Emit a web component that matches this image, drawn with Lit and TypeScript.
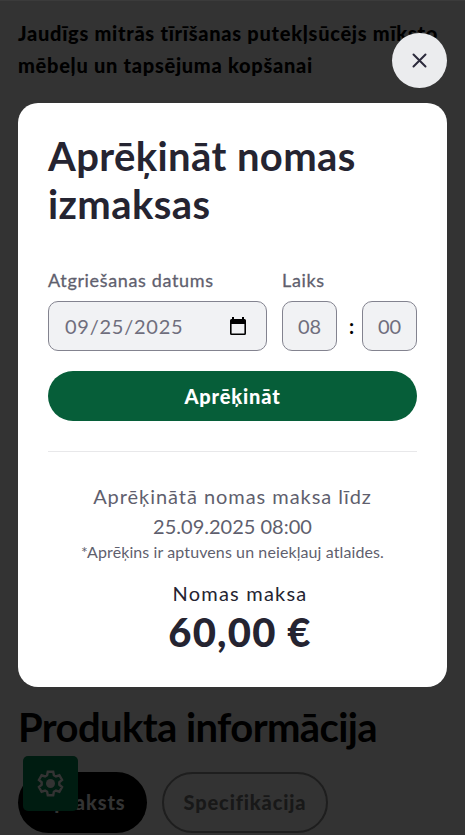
import { LitElement, html, css } from "lit";
import { customElement } from "lit/decorators.js";

// Outline of a six-toothed gear centred on the origin.
const TOOTH = [[-3.4, -8.2], [-2.7, -11.8], [2.7, -11.8], [3.4, -8.2]];
const gearPoints = Array.from({ length: 6 }, (_, i) => (i * Math.PI) / 3)
  .flatMap((a) =>
    TOOTH.map(([x, y]) =>
      `${(x * Math.cos(a) - y * Math.sin(a)).toFixed(2)},${(x * Math.sin(a) + y * Math.cos(a)).toFixed(2)}`))
  .join(" ");

@customElement("app-root")
export class AppRoot extends LitElement {
  static styles = css`
    :host { display: block; position: relative; height: 835px; overflow: hidden; background: #333; color: #000; font-family: Lato, "Open Sans", sans-serif; font-size: 20px; }
    * { box-sizing: border-box; }
    h1, h2, p { margin: 0; }
    span { white-space: nowrap; }
    .page { height: 100%; display: flex; flex-direction: column; justify-content: space-between; padding: 16px 18px 0; border-top: 1px solid #3b3b3b; }
    .intro { font-weight: 900; line-height: 32px; letter-spacing: 0.72px; display: flex; flex-direction: column; align-items: flex-start; }
    .info-title { font-size: 40px; line-height: 48px; margin-bottom: 21px; font-weight: 700; letter-spacing: -0.6px; }
    .tabs { display: flex; gap: 15px; margin-bottom: 2px; }
    .tab { height: 61px; border-radius: 31px; padding-bottom: 2px; display: flex; align-items: center; justify-content: center; font-weight: 900; letter-spacing: 0.85px; }
    .tab.active { width: 129px; background: #000; color: #333; }
    .tab.idle { width: 166px; border: 2px solid #1e1e1e; color: #181818; }
    .settings { position: absolute; left: 23px; top: 756px; width: 55px; height: 55px; border-radius: 5px; background: #001c11; display: grid; place-items: center; }
    .overlay { position: absolute; inset: 0; padding: 33px 18px 0; display: flex; flex-direction: column; gap: 15px; }
    .close { align-self: flex-end; width: 55px; height: 55px; border: 0; padding: 0; border-radius: 50%; background: #ebecee; display: grid; place-items: center; }
    .dialog { height: 584px; background: #fff; border-radius: 20px; padding: 29px 30px 0; display: flex; flex-direction: column; }
    .dialog > * { flex-shrink: 0; }
    .title { color: #252431; font-size: 40px; line-height: 48px; letter-spacing: 0.4px; display: flex; flex-direction: column; align-items: flex-start; }
    .fields { display: grid; grid-template-columns: 219px 135px; gap: 15px; margin-top: 40px; }
    .field { display: flex; flex-direction: column; gap: 9px; }
    .label { font-size: 18px; line-height: 24px; height: 24px; color: #5f5f6e; letter-spacing: 0.65px; -webkit-text-stroke: 0.3px #5f5f6e; }
    .box { height: 50px; border: 1px solid #83838f; border-radius: 10px; background: #f1f2f4; color: #6f6e7d; display: flex; align-items: center; justify-content: center; padding-bottom: 1px; }
    .date { justify-content: space-between; padding: 0 17px 1px 16px; letter-spacing: 0.75px; }
    .time { display: flex; justify-content: space-between; align-items: center; }
    .time .box { width: 55px; }
    .colon { padding-left: 4px; }
    .submit { height: 50px; margin-top: 20px; border: 0; border-radius: 25px; background: #065e39; color: #fff; font: 900 20px Lato, sans-serif; letter-spacing: 0.85px; padding: 0 0 1px; }
    .result { margin-top: 30px; border-top: 1px solid #e8e8ea; padding-top: 29px; display: flex; flex-direction: column; align-items: center; color: #5f5f6e; line-height: 30px; }
    .until { letter-spacing: 0.95px; }
    .note { font-size: 16px; line-height: 22px; letter-spacing: 0.1px; }
    .price { display: flex; flex-direction: column; align-items: center; padding-left: 15px; margin-top: 15px; color: #252431; letter-spacing: 1.2px; }
    .amount { font-size: 40px; line-height: 48px; font-weight: 900; }
  `;

  render() {
    return html`
      <main class="page">
        <p class="intro"><span>Jaudīgs mitrās tīrīšanas putekļsūcējs mīksto</span><span>mēbeļu un tapsējuma kopšanai</span></p>
        <section>
          <h2 class="info-title">Produkta informācija</h2>
          <div class="tabs">
            <div class="tab active">Apraksts</div>
            <div class="tab idle">Specifikācija</div>
          </div>
        </section>
      </main>
      <div class="settings">
        <svg width="27" height="27" viewBox="-13.5 -13.5 27 27">
          <polygon points=${gearPoints} fill="none" stroke="#333" stroke-width="2.4"/>
          <circle r="4.5" fill="#333"/>
        </svg>
      </div>
      <div class="overlay">
        <button class="close" aria-label="Aizvērt">
          <svg width="17" height="17" viewBox="0 0 17 17"><path d="M2.5 2.500 14.500 14.500M14.500 2.500 2.500 14.500" stroke="#2b2a3b" stroke-width="2" stroke-linecap="round"/></svg>
        </button>
        <section class="dialog">
          <h1 class="title"><span>Aprēķināt nomas</span><span>izmaksas</span></h1>
          <div class="fields">
            <div class="field">
              <div class="label">Atgriešanas datums</div>
              <div class="box date"><span>09/25/2025</span>
                <svg width="22" height="22" viewBox="0 0 22 22"><path fill-rule="evenodd" d="M5 2h2v2h8V2h2v2h.5Q19 4 19 5.500V18.500Q19 20 17.500 20h-13Q3 20 3 18.500V5.500Q3 4 4.500 4H5ZM4.600 9V18.400H17.400V9Z"/></svg>
              </div>
            </div>
            <div class="field">
              <div class="label">Laiks</div>
              <div class="time"><div class="box">08</div><b class="colon">:</b><div class="box">00</div></div>
            </div>
          </div>
          <button class="submit">Aprēķināt</button>
          <div class="result">
            <span class="until">Aprēķinātā nomas maksa līdz</span>
            <span>25.09.2025 08:00</span>
            <span class="note">*Aprēķins ir aptuvens un neiekļauj atlaides.</span>
            <div class="price"><span>Nomas maksa</span><span class="amount">60,00 €</span></div>
          </div>
        </section>
      </div>`;
  }
}
